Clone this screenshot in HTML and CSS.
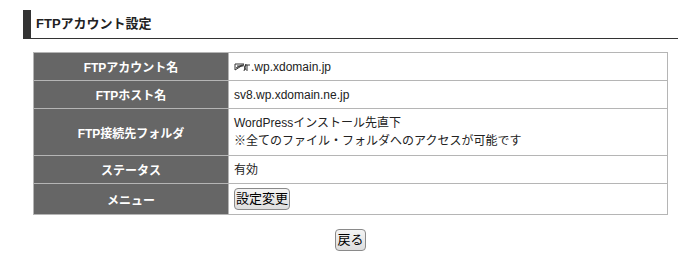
FILE: index.html
```html
<!DOCTYPE html>
<html lang="ja">
<head>
<meta charset="utf-8">
<title>FTPアカウント設定</title>
<link rel="stylesheet" href="styles.css">
</head>
<body>
<div class="page">
  <h2 class="section-title">FTPアカウント設定</h2>
  <div class="content">
    <table class="info-table">
      <tr class="row-1">
        <th>FTPアカウント名</th>
        <td><span class="masked"><svg width="17" height="10" viewBox="0 0 17 10"><path d="M1 2h9M1 2v6M3 4h6M2 6l6-3M1 8l8-5M9 2l3 6M12 2l-2 7M11 3h5M13 3v6" stroke="#333" stroke-width="1" fill="none"/></svg></span>.wp.xdomain.jp</td>
      </tr>
      <tr class="row-2">
        <th>FTPホスト名</th>
        <td>sv8.wp.xdomain.ne.jp</td>
      </tr>
      <tr class="row-3">
        <th>FTP接続先フォルダ</th>
        <td>WordPressインストール先直下<br>※全てのファイル・フォルダへのアクセスが可能です</td>
      </tr>
      <tr class="row-4">
        <th>ステータス</th>
        <td>有効</td>
      </tr>
      <tr class="row-5">
        <th>メニュー</th>
        <td><button class="btn" type="button">設定変更</button></td>
      </tr>
    </table>
    <div class="actions">
      <button class="btn" type="button">戻る</button>
    </div>
  </div>
</div>
</body>
</html>
```
FILE: styles.css
```css
html, body {
  margin: 0;
  padding: 0;
  background: #ffffff;
}
body {
  font-family: "Liberation Sans", "Noto Sans CJK JP", sans-serif;
  font-size: 12px;
  color: #222;
}
.page {
  padding: 10px 15px 0 23px;
  width: 655px;
}
.section-title {
  margin: 0;
  height: 28px;
  line-height: 28px;
  border-left: 8px solid #333;
  border-bottom: 1px solid #333;
  padding-left: 5px;
  font-size: 13px;
  font-weight: bold;
  color: #222;
}
.content {
  padding: 13px 0 0 10px;
  width: 635px;
}
.info-table {
  width: 635px;
  border-collapse: collapse;
  border: 1px solid #b5b5b5;
}
.info-table th,
.info-table td {
  border: 1px solid #b5b5b5;
  padding: 0 5px;
  text-align: left;
  vertical-align: middle;
}
.info-table th {
  width: 184px;
  background: #666666;
  color: #ffffff;
  text-align: center;
  font-weight: bold;
}
.info-table td {
  background: #ffffff;
  color: #222;
  line-height: 18px;
}
.row-1 { height: 28px; }
.row-2 { height: 28px; }
.row-3 { height: 47px; }
.row-4 { height: 28px; }
.row-5 { height: 31px; }
.masked {
  display: inline-block;
  vertical-align: -1px;
}
.masked svg { display: block; }
.btn {
  font-family: "Liberation Sans", "Noto Sans CJK JP", sans-serif;
  font-size: 13px;
  color: #000;
  line-height: 16px;
  padding: 2px 1px;
  border: 1px solid #8a8a8a;
  border-radius: 4px;
  background: linear-gradient(#f4f4f4, #dedede);
  margin: 0;
}
.actions {
  display: flex;
  justify-content: center;
  padding-top: 14px;
}
```
